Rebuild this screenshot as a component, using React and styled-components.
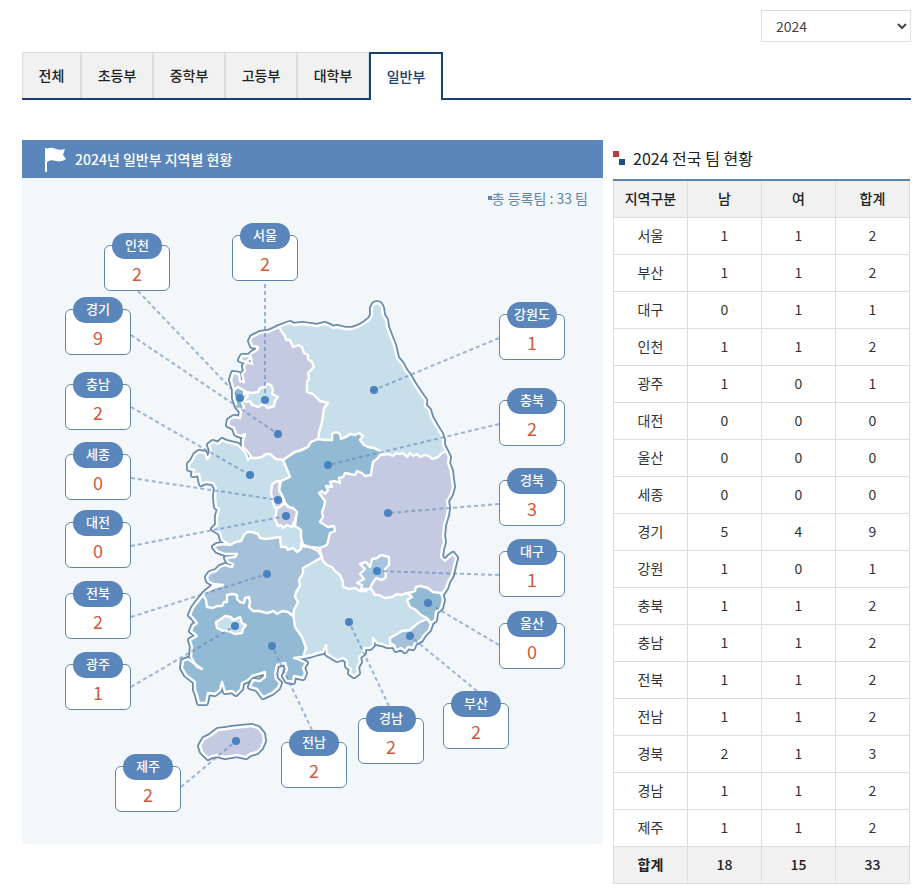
import React, { useState } from 'react';
import styled, { createGlobalStyle } from 'styled-components';

const GlobalStyle = createGlobalStyle`
  * {
    box-sizing: border-box;
  }

  body {
    margin: 0;
    background-color: #fff;
    color: #333;
    font-family: 'Noto Sans CJK KR', 'Noto Sans', sans-serif;
    font-size: 14px;
    line-height: 20px;
  }
`;

const Page = styled.main`
  padding: 10px 10px 4px 22px;
`;

const Toolbar = styled.div`
  display: flex;
  justify-content: flex-end;
  margin-bottom: 10px;
`;

const YearSelect = styled.select`
  width: 150px;
  height: 32px;
  padding: 0 10px;
  border: 1px solid #ddd;
  background-color: #fff;
  color: #444;
  font-family: inherit;
  font-size: 14px;
`;

const Tabs = styled.nav`
  display: flex;
  height: 48px;
  margin-bottom: 40px;
  border-bottom: 2px solid #17426f;
`;

const Tab = styled.button`
  width: ${props => props.$width}px;
  height: ${props => props.$active ? '48px' : '46px'};
  padding: 0 0 2px;
  border: ${props => props.$active ? '2px solid #17426f' : '1px solid #ddd'};
  border-bottom: none;
  background-color: ${props => props.$active ? '#fff' : '#f1f1f1'};
  color: ${props => props.$active ? '#17426f' : '#222'};
  font-family: inherit;
  font-size: 14px;
  font-weight: 500;
  cursor: pointer;
`;

const Content = styled.div`
  display: grid;
  grid-template-columns: minmax(0, 1fr) 297px;
  gap: 10px;
  align-items: start;
  padding-right: 1px;

  @media (max-width: 760px) {
    grid-template-columns: minmax(0, 1fr);
  }
`;

const MapPanel = styled.section`
  background-color: #f3f7fa;
`;

const PanelHeader = styled.header`
  display: flex;
  align-items: center;
  gap: 8px;
  height: 38px;
  padding: 0 22px;
  background-color: #5a86bc;
  color: #fff;
`;

const PanelTitle = styled.h2`
  margin: 0;
  font-size: 14px;
  font-weight: 500;
`;

const MapArea = styled.div`
  position: relative;
  aspect-ratio: 581 / 666;
`;

const MapSvg = styled.svg`
  display: block;
  width: 100%;
  height: 100%;
`;

const TeamTotal = styled.p`
  position: absolute;
  top: 10px;
  right: 15px;
  display: flex;
  align-items: center;
  margin: 0;
  color: #5f87ad;

  &::before {
    content: '';
    width: 4px;
    height: 4px;
    background-color: #5f87ad;
  }
`;

const Pin = styled.div`
  position: absolute;
  left: ${props => props.$x / 5.81}%;
  top: ${props => props.$y / 6.66}%;
  width: 66px;
  display: flex;
  flex-direction: column;
  align-items: center;
`;

const PinLabel = styled.span`
  z-index: 1;
  width: 50px;
  height: 26px;
  border-radius: 13px;
  background-color: #5a86bc;
  color: #fff;
  font-size: 13px;
  font-weight: 500;
  line-height: 24px;
  text-align: center;
`;

const PinCount = styled.strong`
  width: 100%;
  height: 46px;
  margin-top: -14px;
  padding-top: 16px;
  border: 1px solid #5f87ad;
  border-radius: 6px;
  background-color: #fff;
  color: #d05a3c;
  font-size: 18px;
  font-weight: 400;
  line-height: 22px;
  text-align: center;
`;

const TableTitle = styled.h2`
  display: flex;
  align-items: center;
  gap: 8px;
  height: 39px;
  margin: 0;
  padding-bottom: 4px;
  font-size: 16px;
  font-weight: 400;
  color: #222;
`;

const Table = styled.table`
  width: 100%;
  border-collapse: collapse;
  border-top: 2px solid #5a86ad;
  table-layout: fixed;

  th,
  td {
    height: 37px;
    padding: 0 0 2px;
    border: 1px solid #ddd;
    text-align: center;
    font-weight: 400;
  }

  thead th {
    border-top: 2px solid #5a86ad;
    background-color: #f1f1f1;
    color: #222;
    font-weight: 500;
  }

  tfoot th,
  tfoot td {
    background-color: #f1f1f1;
    color: #222;
    font-weight: 500;
  }

  tfoot th {
    font-weight: 700;
  }
`;

const TABS = [
  { label: '전체', width: 59 },
  { label: '초등부', width: 72 },
  { label: '중학부', width: 72 },
  { label: '고등부', width: 72 },
  { label: '대학부', width: 72 },
  { label: '일반부', width: 74 },
];

const ROWS = [
  ['서울', 1, 1],
  ['부산', 1, 1],
  ['대구', 0, 1],
  ['인천', 1, 1],
  ['광주', 1, 0],
  ['대전', 0, 0],
  ['울산', 0, 0],
  ['세종', 0, 0],
  ['경기', 5, 4],
  ['강원', 1, 0],
  ['충북', 1, 1],
  ['충남', 1, 1],
  ['전북', 1, 1],
  ['전남', 1, 1],
  ['경북', 2, 1],
  ['경남', 1, 1],
  ['제주', 1, 1],
];

// x, y: label corner / line: from the label to the dot of the region
const PINS = [
  { name: '인천', count: 2, x: 82, y: 55, line: [138, 291, 240, 398] },
  { name: '서울', count: 2, x: 210, y: 45, line: [265, 284, 265, 400] },
  { name: '경기', count: 9, x: 43, y: 119, line: [131, 335, 278, 434] },
  { name: '충남', count: 2, x: 43, y: 194, line: [131, 407, 250, 475] },
  { name: '세종', count: 0, x: 43, y: 264, line: [131, 478, 278, 500] },
  { name: '대전', count: 0, x: 43, y: 332, line: [131, 546, 286, 516] },
  { name: '전북', count: 2, x: 43, y: 403, line: [131, 617, 267, 574] },
  { name: '광주', count: 1, x: 43, y: 474, line: [131, 687, 235, 626] },
  { name: '제주', count: 2, x: 93, y: 576, line: [181, 787, 236, 741] },
  { name: '강원도', count: 1, x: 477, y: 124, line: [499, 338, 374, 390] },
  { name: '충북', count: 2, x: 477, y: 210, line: [499, 424, 328, 465] },
  { name: '경북', count: 3, x: 477, y: 290, line: [499, 504, 388, 513] },
  { name: '대구', count: 1, x: 477, y: 361, line: [499, 575, 377, 571] },
  { name: '울산', count: 0, x: 477, y: 433, line: [499, 645, 428, 603] },
  { name: '부산', count: 2, x: 421, y: 513, line: [477, 691, 410, 636] },
  { name: '경남', count: 2, x: 336, y: 528, line: [389, 706, 349, 622] },
  { name: '전남', count: 2, x: 259, y: 552, line: [312, 730, 272, 646] },
];

// Drawn in order: a province runs on under the neighbours that follow it
const REGIONS = [
  {
    id: 'gangwon',
    fill: '#c7dfea',
    points: '279,327 284,325 290,323 294,325 302,324 310,325 317,326 325,324 330,326 333,328 337,327 345,329 352,329 360,326 365,323 370,319 372,315 372,308 374,304 377,303 380,304 382,308 383,315 386,320 387,327 390,335 394,345 397,358 402,364 405,370 410,377 414,384 420,393 425,400 425,406 429,410 431,417 436,426 441,434 443,440 443,445 446,451 440,470 380,470 300,460 290,400',
  },
  {
    id: 'chungnam',
    fill: '#c7dfea',
    points: '248,460 246,454 243,450 238,445 230,443 226,442 222,440 218,444 213,442 209,445 211,450 210,455 207,459 205,453 199,452 195,455 192,461 189,464 189,469 194,470 193,475 199,474 201,484 206,482 213,483 216,488 215,496 216,507 219,509 217,516 217,525 213,529 220,533 222,540 230,545 245,560 275,555 279,538 281,547 286,547 288,550 293,548 297,552 301,549 301,543 310,530 310,460 290,440 260,445',
  },
  {
    id: 'gyeongnam',
    fill: '#c7dfea',
    points: '303,657 312,655 318,653 323,652 326,645 327,654 332,657 337,660 343,658 347,661 347,666 351,669 350,673 354,676 358,673 357,667 360,662 359,657 364,653 364,648 370,648 373,645 373,638 377,643 382,644 387,646 394,646 410,640 431,623 425,590 375,560 320,550 280,570 280,650',
  },
  {
    id: 'jeonnam',
    fill: '#92bad5',
    points: '203,595 199,600 193,608 190,615 193,618 197,623 193,626 191,631 197,636 190,640 192,647 191,657 197,667 202,669 195,664 188,659 183,661 182,668 186,675 195,682 195,690 197,695 199,703 206,703 208,693 215,694 220,690 222,682 225,692 232,691 236,694 241,689 242,683 248,680 252,676 259,674 265,672 265,677 260,681 253,680 250,687 257,689 263,697 272,693 278,688 280,683 276,679 275,674 277,665 285,663 287,669 284,676 287,681 293,682 294,676 303,678 305,673 303,668 306,663 298,659 294,658 303,657 306,648 302,637 295,627 293,612 285,590 220,580',
  },
  {
    id: 'gyeongbuk',
    fill: '#c3cae1',
    points: '382,455 388,454 393,456 396,453 400,454 403,453 407,457 410,453 413,456 417,454 420,457 425,455 429,456 432,459 438,457 442,453 446,451 449,457 448,463 451,471 452,480 453,487 451,494 447,501 448,508 447,515 444,525 443,536 444,542 442,549 441,557 445,561 449,557 453,554 456,558 454,566 452,575 448,582 446,588 442,594 430,600 415,592 407,593 401,595 397,594 392,597 385,598 379,595 375,595 370,587 366,591 360,591 355,588 349,589 343,587 343,582 340,575 335,571 332,567 327,565 323,561 320,550 300,520 310,480 360,450',
  },
  {
    id: 'jeonbuk',
    fill: '#a5c1da',
    points: '230,545 224,544 217,545 214,547 217,551 225,554 237,554 235,557 226,558 228,562 233,564 232,567 225,565 220,567 216,571 210,573 207,577 208,581 213,584 223,585 215,587 207,591 203,595 206,600 207,607 213,608 217,606 222,606 224,602 227,602 227,595 232,594 237,595 237,599 240,602 244,603 245,598 249,597 250,602 249,607 253,611 259,611 267,613 274,611 277,614 282,611 288,612 293,616 294,610 298,602 295,597 296,592 300,586 299,580 303,573 303,568 312,563 317,560 322,557 318,551 310,547 301,546 301,549 297,552 293,548 288,550 286,547 281,547 280,537 273,538 266,539 260,538 258,534 252,532 247,532 244,535 241,541 236,542',
  },
  {
    id: 'gyeonggi',
    fill: '#c3cae1',
    points: '279,327 275,329 268,332 260,333 252,337 250,341 252,346 258,347 257,350 252,353 249,356 242,356 240,360 246,362 251,357 252,364 247,362 244,366 245,371 242,374 244,382 240,381 239,374 233,373 231,380 234,390 235,398 238,407 241,412 240,418 234,417 229,420 228,425 234,428 236,434 241,436 245,434 243,440 243,447 248,452 252,458 257,458 262,457 266,454 270,454 276,459 283,460 295,452 308,447 311,442 318,440 319,433 322,422 324,408 328,403 320,401 313,394 307,392 307,382 309,379 308,373 314,367 312,362 308,359 308,355 304,353 302,347 298,345 293,347 290,340 286,340 285,336 282,332',
  },
  {
    id: 'chungbuk',
    fill: '#92bad5',
    points: '283,460 295,452 302,450 308,447 311,442 318,439 325,440 332,440 332,434 336,432 340,434 341,439 346,437 350,434 355,435 359,433 363,436 360,440 364,445 368,447 374,448 382,452 378,458 373,462 372,468 371,475 365,476 362,473 357,471 355,475 350,474 345,473 343,477 339,478 340,483 335,481 330,482 332,487 326,486 328,490 325,494 322,491 319,493 325,501 324,507 322,512 323,517 320,522 328,527 334,526 335,531 330,533 329,537 327,545 320,548 310,547 303,545 301,537 301,530 295,526 296,518 297,512 289,507 285,503 283,497 279,490 281,481 290,477 288,472 286,467',
  },
  { id: 'incheon', fill: '#8db8d2', points: '234,390 238,387 245,391 243,397 242,402 244,407 242,411 237,407 234,398' },
  {
    id: 'seoul',
    fill: '#c7dfea',
    points: '245,392 252,393 258,392 260,388 265,387 267,384 271,385 273,390 272,394 278,397 275,401 274,406 268,408 263,404 258,407 252,405 250,401 246,402 244,400 248,396',
  },
  { id: 'sejong', fill: '#c3cae1', points: '272,485 275,482 280,481 279,490 283,498 284,503 280,507 275,508 273,502 271,493' },
  { id: 'daejeon', fill: '#c3cae1', points: '277,508 280,507 285,503 288,507 293,508 297,512 295,520 292,527 287,525 283,528 281,525 278,526 275,519' },
  { id: 'gwangju', fill: '#c7dfea', points: '216,622 221,619 225,616 231,617 233,620 240,617 242,623 246,625 243,629 242,633 235,634 228,631 223,631 217,628' },
  { id: 'daegu', fill: '#a5c6de', points: '360,564 366,562 370,567 372,559 377,558 381,555 389,557 389,565 385,569 386,577 382,580 376,578 372,584 370,589 361,589 362,585 357,583 364,579 360,574 365,569' },
  { id: 'ulsan', fill: '#92bad5', points: '407,600 412,597 408,594 415,591 416,587 420,586 428,588 433,592 441,593 443,600 441,608 436,612 435,620 431,623 427,618 421,615 416,610 410,607' },
  { id: 'busan', fill: '#a5c1da', points: '390,638 397,634 402,631 410,630 418,623 427,619 431,624 429,630 424,635 421,640 415,643 413,648 408,647 405,651 401,648 396,650 394,645 390,643' },
  { id: 'jeju', fill: '#c3cae1', points: '200,746 204,739 210,736 218,730 226,729 232,728 242,727 252,726 258,728 263,734 264,741 261,748 257,752 250,754 246,757 237,755 225,757 218,755 212,756 208,758 202,752' },
];

const FlagIcon = () => (
  <svg width="23" height="26" viewBox="0 0 23 26" fill="#fff" aria-hidden="true">
    <path d="M1 2h2v24H1z" />
    <path d="M3 3c3-2 6-1 9 0s6 1 9 0l-2 6 3 4c-3 2-6 3-10 2s-6-1-9 1z" />
  </svg>
);

const SquaresIcon = () => (
  <svg width="12" height="14" viewBox="0 0 12 14" aria-hidden="true">
    <path fill="#b93a41" d="M0 0h6v6H0z" />
    <path fill="#1d4f86" d="M6 8h6v6H6z" />
  </svg>
);

const KoreaMap = () => (
  <MapSvg viewBox="22 178 581 666" aria-hidden="true">
    <g fill="none" stroke="#6a8cad" strokeWidth="6" strokeLinejoin="round">
      {REGIONS.map(region => (
        <polygon key={region.id} points={region.points} />
      ))}
    </g>
    <g stroke="#fff" strokeWidth="2.4" strokeLinejoin="round">
      {REGIONS.map(region => (
        <polygon key={region.id} points={region.points} fill={region.fill} />
      ))}
    </g>
    {PINS.map(({ name, line: [x1, y1, x2, y2] }) => (
      <g key={name}>
        <line
          x1={x1}
          y1={y1}
          x2={x2}
          y2={y2}
          stroke="#5f87bc"
          strokeOpacity="0.6"
          strokeWidth="2"
          strokeDasharray="4 3"
        />
        <circle cx={x2} cy={y2} r="4" fill="#4a82bf" />
      </g>
    ))}
  </MapSvg>
);

const TeamTable = () => {
  const men = ROWS.reduce((sum, row) => sum + row[1], 0);
  const women = ROWS.reduce((sum, row) => sum + row[2], 0);

  return (
    <Table>
      <thead>
        <tr>
          <th scope="col">지역구분</th>
          <th scope="col">남</th>
          <th scope="col">여</th>
          <th scope="col">합계</th>
        </tr>
      </thead>
      <tbody>
        {ROWS.map(([name, m, w]) => (
          <tr key={name}>
            <th scope="row">{name}</th>
            <td>{m}</td>
            <td>{w}</td>
            <td>{m + w}</td>
          </tr>
        ))}
      </tbody>
      <tfoot>
        <tr>
          <th scope="row">합계</th>
          <td>{men}</td>
          <td>{women}</td>
          <td>{men + women}</td>
        </tr>
      </tfoot>
    </Table>
  );
};

const App = () => {
  const [year, setYear] = useState('2024');
  const [tab, setTab] = useState('일반부');

  return (
    <>
      <GlobalStyle />
      <Page>
        <Toolbar>
          <YearSelect
            aria-label="연도"
            value={year}
            onChange={e => setYear(e.target.value)}
          >
            <option value="2024">2024</option>
            <option value="2023">2023</option>
            <option value="2022">2022</option>
          </YearSelect>
        </Toolbar>

        <Tabs>
          {TABS.map(({ label, width }) => (
            <Tab
              key={label}
              type="button"
              $width={width}
              $active={label === tab}
              onClick={() => setTab(label)}
            >
              {label}
            </Tab>
          ))}
        </Tabs>

        <Content>
          <MapPanel>
            <PanelHeader>
              <FlagIcon />
              <PanelTitle>{year}년 {tab} 지역별 현황</PanelTitle>
            </PanelHeader>
            <MapArea>
              <KoreaMap />
              <TeamTotal>총 등록팀 : 33 팀</TeamTotal>
              {PINS.map(pin => (
                <Pin key={pin.name} $x={pin.x} $y={pin.y}>
                  <PinLabel>{pin.name}</PinLabel>
                  <PinCount>{pin.count}</PinCount>
                </Pin>
              ))}
            </MapArea>
          </MapPanel>

          <section>
            <TableTitle>
              <SquaresIcon />
              {year} 전국 팀 현황
            </TableTitle>
            <TeamTable />
          </section>
        </Content>
      </Page>
    </>
  );
};

export default App;
